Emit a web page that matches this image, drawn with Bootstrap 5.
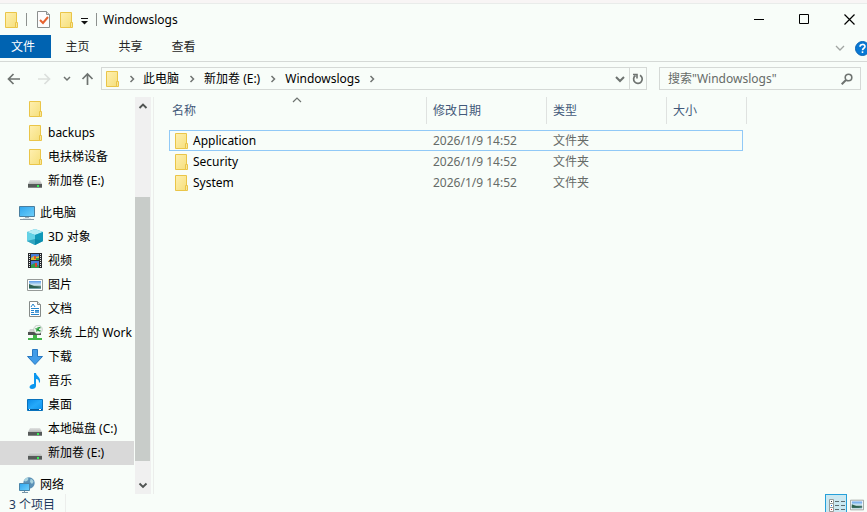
<!DOCTYPE html>
<html lang="zh-CN">
<head>
<meta charset="utf-8">
<meta name="viewport" content="width=device-width, initial-scale=1">
<title>Windowslogs</title>
<link href="https://cdn.jsdelivr.net/npm/bootstrap@5.3.0/dist/css/bootstrap.min.css" rel="stylesheet">
<style>
:root { --paper: #f8fdf9; --rule: #d5d9d6; --ink: #000; --soft: #666b68; --heading: #43597a; }
body { background: var(--paper); color: var(--ink); font: 12px/20px "Noto Sans", "Noto Sans CJK SC", sans-serif; }
button, input { font: inherit; color: inherit; }
svg { display: block; flex: none; }
.plain { background: none; border: 0; padding: 0; display: flex; align-items: center; justify-content: center; }
.top-strip { height: 4px; background: #f8f5f5; border-bottom: 1px solid #e9ecea; }
.title-bar { height: 31px; padding-left: 3px; gap: 6px; }
.window-title { font-size: 12px; line-height: 20px; font-weight: 400; }
.tick-line { width: 1px; height: 13px; background: #8d918e; }
.tick-line.first { margin: 0 3px 0 1px; }
.win-group { gap: 10px; }
.win-btn { width: 35px; height: 31px; }
.ribbon { height: 27px; border-bottom: 1px solid var(--rule); }
.tab-btn { width: 53px; height: 23px; color: #262626; }
.tab-file { width: 51px; background: #0063b1; color: #fff; padding-right: 5px; }
.help-btn { margin-right: -3px; }
.tools { height: 35px; padding: 5px 6px 0 7px; }
.up-btn { margin: 0 7px 0 6px; }
.field-box { height: 23px; border: 1px solid var(--rule); }
.field-box.path { padding-left: 2px; }
.step { width: 25px; height: 21px; }
.step.first { width: 23px; }
.refresh { width: 17px; height: 21px; border-left: 1px solid var(--rule); }
.search-box { width: 202px; padding: 0 7px 0 8px; margin-left: 12px; }
.search-box input { background: none; border: 0; outline: 0; padding: 0; min-width: 0; }
.search-box input::placeholder { color: var(--soft); opacity: 1; }
.side { width: 154px; border-right: 1px solid #eceeec; }
.tree a { height: 24px; gap: 5px; padding-left: 27px; color: var(--ink); text-decoration: none; white-space: nowrap; }
.tree a.root { padding-left: 19px; margin-top: 8px; }
.tree a.current { background: #d9d9d9; margin-right: 1px; }
.scroller { width: 16px; margin-right: 2px; background: #f0f0f0; }
.scroller button { height: 18px; }
.thumb-gap { flex: 82 0 0; }
.thumb { flex: 264 0 0; background: #c8ccc9; width: 15px; }
.thumb-rest { flex: 15 0 0; }
.files { padding-left: 15px; }
.files table { table-layout: fixed; width: 578px; border-collapse: separate; border-spacing: 0; }
.files th { height: 27px; font-weight: 400; color: var(--heading); padding: 0 0 0 6px; border-right: 1px solid #dfe2e0; position: relative; }
.files th:first-child { padding-left: 3px; }
.files .gap-row td { height: 6px; padding: 0; }
.files .item td { height: 21px; padding: 0 0 0 6px; line-height: 19px; color: var(--soft); }
.files .item td:last-child { padding: 0; }
.files .item td:first-child { color: var(--ink); padding-left: 4px; }
.files .chosen td { border: 1px solid #91c9f7; border-width: 1px 0; }
.files .item.chosen td:first-child { border-left-width: 1px; padding-left: 3px; }
.files .chosen td.edge { border-right-width: 1px; }
.files tr td.tail { border: 0; }
.sort-mark { position: absolute; top: 0; left: 48%; }
.w-name { width: 258px; } .w-kind { width: 120px; } .w-size { width: 76px; } .w-tail { width: 4px; }
.status { height: 18px; padding-left: 9px; color: #1e395b; }
.status .count { border-right: 1px solid #eceeec; padding-right: 10px; line-height: 22px; }
.view-on { width: 22px; height: 22px; background: #cbe8f1; border: 1px solid #26a0da; }
.view-off { width: 20px; height: 22px; }
</style>
<script src="https://cdn.jsdelivr.net/npm/bootstrap@5.3.0/dist/js/bootstrap.bundle.min.js"></script>
</head>
<body>
<svg width="0" height="0" class="position-absolute" aria-hidden="true">
  <defs>
    <linearGradient id="g-fold" x2="1" y2="1"><stop stop-color="#fff0b0"/><stop offset="1" stop-color="#f5df7c"/></linearGradient>
    <linearGradient id="g-screen" x2="1" y2="1"><stop stop-color="#2fa5ee"/><stop offset="1" stop-color="#6fd0fa"/></linearGradient>
    <linearGradient id="g-desk" x2="1" y2="1"><stop stop-color="#0a8ae8"/><stop offset=".5" stop-color="#25a9fa"/><stop offset="1" stop-color="#0c93ef"/></linearGradient>
    <linearGradient id="g-drive" x2="0" y2="1"><stop stop-color="#e1e3e2"/><stop offset="1" stop-color="#b6b9b8"/></linearGradient>
    <linearGradient id="g-sky" x2="0" y2="1"><stop stop-color="#5a9bea"/><stop offset=".5" stop-color="#d5ebf2"/><stop offset=".75" stop-color="#3f6b62"/><stop offset="1" stop-color="#86b7c4"/></linearGradient>
    <symbol id="i-folder" viewBox="0 0 16 16"><path d="M2.500.5h11v15h-11z" fill="url(#g-fold)" stroke="#eac548"/><path d="M12.500 10.500h2v5h-2z" fill="#f8e699" stroke="#eac548"/></symbol>
    <symbol id="i-drive" viewBox="0 0 16 16"><path d="M3 7h10l2 4H1z" fill="url(#g-drive)"/><path d="M1 11h14v4H1z" fill="#565a59"/><path d="M1 14h14v1H1z" fill="#838786"/><path d="M10 12h2v2h-2z" fill="#35ef55"/></symbol>
    <symbol id="i-pc" viewBox="0 0 16 16"><path d="M.5 1.500h15v10H.5z" fill="url(#g-screen)" stroke="#4a7e9f"/><path d="M6 12h4v1H6z" fill="#a4b0b7"/><path d="M4 13h8v1H4z" fill="#d9e3e8"/><path d="M1 14.500h14" stroke="#8797a4"/></symbol>
    <symbol id="i-cube" viewBox="0 0 16 16"><path d="M0 3l8-3 8 3v9l-8 4-8-4z" fill="#35b7d4"/><path d="M0 3l8-3 8 3-8 3z" fill="#b7edf5"/><path d="M0 3l8 3v10l-8-4z" fill="#64d2e6"/><path d="M8 6l8-3v9l-8 4z" fill="#1199b9"/><path d="M0 12l8-2 8 2-8 4z" fill="#087e9e" opacity=".55"/></symbol>
    <symbol id="i-film" viewBox="0 0 16 16"><path d="M1 0h14v15H1z" fill="#292b2e"/><path d="M4 1h8v6H4z" fill="#477fd8"/><path d="M4 8h8v7H4z" fill="#477fd8"/><path d="M4 5l3-2 2 1 3-1v4H4z" fill="#d8bd35"/><path d="M7 3h2v3H7z" fill="#e45525"/><path d="M9 5h3v2H9zM4 12l4-2 4 3v2H4z" fill="#329b49"/><path d="M8 10h2v4H8z" fill="#db4332"/><path d="M2.500 1v14M13.500 1v14" stroke="#e8ecea" stroke-dasharray="1 1"/></symbol>
    <symbol id="i-photo" viewBox="0 0 16 16"><path d="M.5 2.500h15v11H.5z" fill="#fff" stroke="#969a98"/><path d="M2 4h12v8H2z" fill="url(#g-sky)"/><path d="M2 7l5 2 7 1-4 1H2z" fill="#2e6150"/></symbol>
    <symbol id="i-doc" viewBox="0 0 16 16"><path d="M2.500.5h8l3 3v12h-11z" fill="#fff" stroke="#858a88"/><path d="M10.500.5v3h3" fill="#dfe3e1" stroke="#858a88"/><path d="M4 6l2-3 2 3M4 7.500h8M4 9.500h3M8 9.500h4M4 11.500h3M4 13.500h8" fill="none" stroke="#2686cd"/><path d="M8 10h4v2H8z" fill="#61a5d8"/></symbol>
    <symbol id="i-netdrive" viewBox="0 0 16 16"><path d="M3 4h8l3 4H1z" fill="#cfd2d1"/><path d="M1 7h13v3H1z" fill="#4d5150"/><circle cx="11" cy="4.500" r="4.300" fill="#eef4f0" stroke="#a9b2ac" stroke-width=".6"/><path d="M8.500 3.500l2 1-1 2M13.500 2.500l-2.500.5.5 2.500 2 .5" stroke="#249b37" stroke-width="1.300" fill="none"/><path d="M6 10h4v3h5v2H1v-2h5z" fill="#42b549"/></symbol>
    <symbol id="i-down" viewBox="0 0 16 16"><path d="M5.500.5h5v7h5L8 15.500.5 7.500h5z" fill="#419ce8" stroke="#2878c2"/></symbol>
    <symbol id="i-note" viewBox="0 0 16 16"><path d="M7 0h2c0 3 5 4 4 9l-1 1c0-3-1-4-3-4v7c0 2-2 3-4 3-3 0-3-3-1-4 1-1 2-1 3-1z" fill="#0a97ef"/></symbol>
    <symbol id="i-desk" viewBox="0 0 16 16"><path d="M.5 2.500h15v11H.5z" fill="url(#g-desk)" stroke="#0872bd"/><path d="M1 12.500h14" stroke="#075a9b"/><path d="M2 12.500h1M12 12.500h2" stroke="#fff"/></symbol>
    <symbol id="i-net" viewBox="0 0 16 16"><circle cx="10" cy="6" r="5.700" fill="#5b91b6"/><path d="M7 1c3-1 3 2 1 3-2 1-3 0-3-1zM11.500 2c2 0 3 2 3 3l-1.500 2-2-2z" fill="#a8d3df"/><path d="M.5 6.500h10v7H.5z" fill="url(#g-screen)" stroke="#4b85a8"/><path d="M3 15.500h6M5.500 14v1" stroke="#7995a8"/></symbol>
    <symbol id="i-right" viewBox="0 0 8 8"><path d="M2.500 1l3 3-3 3" fill="none" stroke="#707572" stroke-width="1.500"/></symbol>
  </defs>
</svg>

<div class="vh-100 d-flex flex-column overflow-hidden">
  <div class="top-strip flex-shrink-0"></div>
  <header class="title-bar d-flex align-items-center flex-shrink-0">
    <svg width="16" height="16" aria-hidden="true"><use href="#i-folder"/></svg>
    <span class="tick-line first"></span>
    <button class="plain" aria-label="属性"><svg width="16" height="17" viewBox="0 0 16 17"><path d="M1.500.5h9l3 3v13h-12z" fill="#fdfdfd" stroke="#8b8f8e"/><path d="M10.500.5v3h3" fill="#ddd" stroke="#8b8f8e"/><path d="M4 9l3 3 5-6" fill="none" stroke="#e6622e" stroke-width="2"/></svg></button>
    <button class="plain" aria-label="新建文件夹"><svg width="16" height="16"><use href="#i-folder"/></svg></button>
    <button class="plain" aria-label="自定义快速访问工具栏"><svg width="10" height="10" viewBox="0 0 10 10"><path d="M1 3.500h7" stroke="#111"/><path d="M1 6h7L4.500 9.500z" fill="#111"/></svg></button>
    <span class="tick-line"></span>
    <h1 class="window-title mb-0 flex-grow-1">Windowslogs</h1>
    <div class="win-group d-flex">
      <button class="plain win-btn" aria-label="最小化"><svg width="11" height="11"><path d="M0 5.500h10" stroke="#000"/></svg></button>
      <button class="plain win-btn" aria-label="最大化"><svg width="11" height="11"><path d="M.5.5h9v9h-9z" fill="none" stroke="#000"/></svg></button>
      <button class="plain win-btn" aria-label="关闭"><svg width="11" height="11"><path d="M.5.5l10 10M10.500.5l-10 10" stroke="#000" stroke-width="1.200"/></svg></button>
    </div>
  </header>

  <nav class="ribbon d-flex flex-shrink-0" aria-label="功能区">
    <button class="plain tab-btn tab-file">文件</button>
    <button class="plain tab-btn">主页</button>
    <button class="plain tab-btn">共享</button>
    <button class="plain tab-btn">查看</button>
    <button class="plain ms-auto me-2" aria-label="展开功能区"><svg width="12" height="10" viewBox="0 0 12 10"><path d="M1 3l4 4 4-4" fill="none" stroke="#a1a5a2" stroke-width="1.300"/></svg></button>
    <button class="plain help-btn" aria-label="帮助"><svg width="15" height="15" viewBox="0 0 15 15"><circle cx="7.500" cy="7.500" r="7" fill="#0878d4" stroke="#0762b5"/><path d="M5 5.700c0-3 5-3 5-.2 0 1.800-2.500 1.700-2.500 3.700" fill="none" stroke="#fff" stroke-width="1.600"/><path d="M6.700 10.300h1.600v1.700H6.700z" fill="#fff"/></svg></button>
  </nav>

  <div class="tools d-flex align-items-start flex-shrink-0">
    <button class="plain" aria-label="后退"><svg width="14" height="23" viewBox="0 0 14 23"><path d="M13 12H2M6.500 7L1.500 12l5 5" fill="none" stroke="#6e7370" stroke-width="1.700"/></svg></button>
    <button class="plain ms-3" aria-label="前进"><svg width="14" height="23" viewBox="0 0 14 23"><path d="M1 12h11M7.500 7l5 5-5 5" fill="none" stroke="#dbdfdc" stroke-width="1.700"/></svg></button>
    <button class="plain ms-2" aria-label="最近位置"><svg width="16" height="23" viewBox="0 0 16 23"><path d="M5 10l3 3 3-3" fill="none" stroke="#6e7370" stroke-width="1.500"/></svg></button>
    <button class="plain up-btn" aria-label="上移"><svg width="13" height="23" viewBox="0 0 13 23"><path d="M6.500 18V7M1.500 12l5-5 5 5" fill="none" stroke="#6e7370" stroke-width="1.700"/></svg></button>
    <div class="field-box path d-flex align-items-center flex-grow-1 overflow-hidden">
      <svg width="16" height="16" aria-hidden="true"><use href="#i-folder"/></svg>
      <button class="plain step first" aria-label="展开"><svg width="8" height="8"><use href="#i-right"/></svg></button>
      <button class="plain text-nowrap">此电脑</button>
      <button class="plain step" aria-label="展开"><svg width="8" height="8"><use href="#i-right"/></svg></button>
      <button class="plain text-nowrap">新加卷 (E:)</button>
      <button class="plain step" aria-label="展开"><svg width="8" height="8"><use href="#i-right"/></svg></button>
      <button class="plain text-nowrap">Windowslogs</button>
      <button class="plain step" aria-label="展开"><svg width="8" height="8"><use href="#i-right"/></svg></button>
      <button class="plain ms-auto me-1" aria-label="以前的位置"><svg width="10" height="10" viewBox="0 0 10 10"><path d="M1 3l4 4 4-4" fill="none" stroke="#6e7370" stroke-width="2"/></svg></button>
      <button class="plain refresh" aria-label="刷新"><svg width="12" height="12" viewBox="0 0 12 12"><path d="M8 2.300a4.300 4.300 0 1 1-4.500.2" fill="none" stroke="#6e7370" stroke-width="1.700"/><path d="M1 1.500h4v4" fill="none" stroke="#6e7370" stroke-width="1.600"/></svg></button>
    </div>
    <label class="field-box search-box d-flex align-items-center">
      <input class="flex-grow-1" type="text" placeholder='搜索"Windowslogs"' aria-label="搜索 Windowslogs">
      <svg width="12" height="12" viewBox="0 0 12 12" aria-hidden="true"><circle cx="7.500" cy="4.500" r="3.300" fill="none" stroke="#6e7370" stroke-width="1.600"/><path d="M5 7l-4.300 4.300" stroke="#6e7370" stroke-width="2"/></svg>
    </label>
  </div>

  <div class="d-flex flex-grow-1 overflow-hidden">
    <aside class="side d-flex flex-shrink-0">
      <nav class="tree flex-grow-1 overflow-hidden" aria-label="导航窗格">
        <a class="d-flex align-items-center" href="#" aria-label="文件夹"><svg width="16" height="16"><use href="#i-folder"/></svg></a>
        <a class="d-flex align-items-center" href="#"><svg width="16" height="16"><use href="#i-folder"/></svg>backups</a>
        <a class="d-flex align-items-center" href="#"><svg width="16" height="16"><use href="#i-folder"/></svg>电扶梯设备</a>
        <a class="d-flex align-items-center" href="#"><svg width="16" height="16"><use href="#i-drive"/></svg>新加卷 (E:)</a>
        <a class="d-flex align-items-center root" href="#"><svg width="16" height="16"><use href="#i-pc"/></svg>此电脑</a>
        <a class="d-flex align-items-center" href="#"><svg width="16" height="16"><use href="#i-cube"/></svg>3D 对象</a>
        <a class="d-flex align-items-center" href="#"><svg width="16" height="16"><use href="#i-film"/></svg>视频</a>
        <a class="d-flex align-items-center" href="#"><svg width="16" height="16"><use href="#i-photo"/></svg>图片</a>
        <a class="d-flex align-items-center" href="#"><svg width="16" height="16"><use href="#i-doc"/></svg>文档</a>
        <a class="d-flex align-items-center" href="#"><svg width="16" height="16"><use href="#i-netdrive"/></svg>系统 上的 Work</a>
        <a class="d-flex align-items-center" href="#"><svg width="16" height="16"><use href="#i-down"/></svg>下载</a>
        <a class="d-flex align-items-center" href="#"><svg width="16" height="16"><use href="#i-note"/></svg>音乐</a>
        <a class="d-flex align-items-center" href="#"><svg width="16" height="16"><use href="#i-desk"/></svg>桌面</a>
        <a class="d-flex align-items-center" href="#"><svg width="16" height="16"><use href="#i-drive"/></svg>本地磁盘 (C:)</a>
        <a class="d-flex align-items-center current" href="#" aria-current="true"><svg width="16" height="16"><use href="#i-drive"/></svg>新加卷 (E:)</a>
        <a class="d-flex align-items-center root" href="#"><svg width="16" height="16"><use href="#i-net"/></svg>网络</a>
      </nav>
      <div class="scroller d-flex flex-column flex-shrink-0">
        <button class="plain" aria-label="向上滚动"><svg width="10" height="10" viewBox="0 0 10 10"><path d="M1.500 7L5 3.500 8.500 7" fill="none" stroke="#505452" stroke-width="1.900"/></svg></button>
        <div class="thumb-gap"></div><div class="thumb"></div><div class="thumb-rest"></div>
        <button class="plain" aria-label="向下滚动"><svg width="10" height="10" viewBox="0 0 10 10"><path d="M1.500 3.500L5 7l3.500-3.500" fill="none" stroke="#505452" stroke-width="1.900"/></svg></button>
      </div>
    </aside>
    <main class="files flex-grow-1 overflow-hidden">
      <table>
        <colgroup><col class="w-name"><col class="w-kind"><col class="w-kind"><col class="w-size"><col class="w-tail"></colgroup>
        <thead>
          <tr><th scope="col" aria-sort="ascending">名称<svg class="sort-mark" width="10" height="6" viewBox="0 0 10 6"><path d="M1 5l4-4 4 4" fill="none" stroke="#6e7370" stroke-width="1.200"/></svg></th><th scope="col">修改日期</th><th scope="col">类型</th><th scope="col" colspan="2">大小</th></tr>
        </thead>
        <tbody>
          <tr class="gap-row"><td colspan="5"></td></tr>
          <tr class="item chosen"><td><div class="d-flex align-items-center gap-1"><svg width="16" height="16"><use href="#i-folder"/></svg>Application</div></td><td>2026/1/9 14:52</td><td>文件夹</td><td class="edge"></td><td class="tail"></td></tr>
          <tr class="item"><td><div class="d-flex align-items-center gap-1"><svg width="16" height="16"><use href="#i-folder"/></svg>Security</div></td><td>2026/1/9 14:52</td><td>文件夹</td><td></td><td class="tail"></td></tr>
          <tr class="item"><td><div class="d-flex align-items-center gap-1"><svg width="16" height="16"><use href="#i-folder"/></svg>System</div></td><td>2026/1/9 14:52</td><td>文件夹</td><td></td><td class="tail"></td></tr>
        </tbody>
      </table>
    </main>
  </div>

  <footer class="status d-flex flex-shrink-0 overflow-hidden">
    <span class="count">3 个项目</span>
    <div class="d-flex ms-auto">
      <button class="plain view-on" aria-label="详细信息"><svg width="18" height="18" viewBox="0 0 18 18"><path d="M2.500 3.500h4v4h-4zM2.500 7.500h4v4h-4zM2.500 11.500h4v4h-4z" fill="#fff" stroke="#969a98"/><path d="M4 5h1v1H4z" fill="#333"/><path d="M4 9h1v1H4z" fill="#1a72e8"/><path d="M4 13h1v1H4z" fill="#d22"/><path d="M8 5.500h4M14 5.500h4M8 9.500h4M14 9.500h4M8 13.500h4M14 13.500h4" stroke="#5d6d72"/></svg></button>
      <button class="plain view-off" aria-label="大图标"><svg width="14" height="14" viewBox="0 1 16 14"><use href="#i-photo" width="16" height="16"/></svg></button>
    </div>
  </footer>
</div>
</body>
</html>
